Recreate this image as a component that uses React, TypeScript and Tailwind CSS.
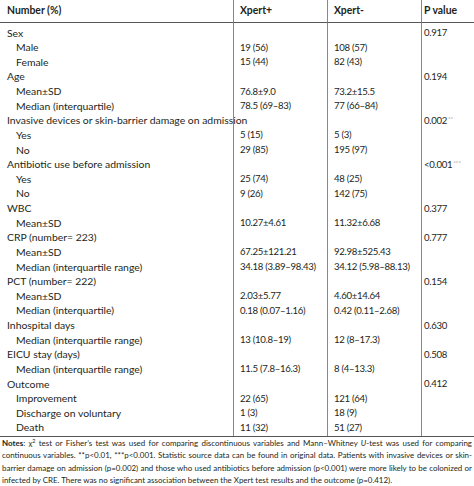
import React from "react";

type Row = { l: string; i?: boolean; a?: string; b?: string; p?: string; s?: string };

const rows: Row[] = [
  { l: "Sex", p: "0.917" },
  { l: "Male", i: true, a: "19 (56)", b: "108 (57)" },
  { l: "Female", i: true, a: "15 (44)", b: "82 (43)" },
  { l: "Age", p: "0.194" },
  { l: "Mean±SD", i: true, a: "76.8±9.0", b: "73.2±15.5" },
  { l: "Median (interquartile)", i: true, a: "78.5 (69–83)", b: "77 (66–84)" },
  { l: "Invasive devices or skin-barrier damage on admission", p: "0.002", s: "**" },
  { l: "Yes", i: true, a: "5 (15)", b: "5 (3)" },
  { l: "No", i: true, a: "29 (85)", b: "195 (97)" },
  { l: "Antibiotic use before admission", p: "<0.001", s: "***" },
  { l: "Yes", i: true, a: "25 (74)", b: "48 (25)" },
  { l: "No", i: true, a: "9 (26)", b: "142 (75)" },
  { l: "WBC", p: "0.377" },
  { l: "Mean±SD", i: true, a: "10.27±4.61", b: "11.32±6.68" },
  { l: "CRP (number= 223)", p: "0.777" },
  { l: "Mean±SD", i: true, a: "67.25±121.21", b: "92.98±525.43" },
  { l: "Median (interquartile range)", i: true, a: "34.18 (3.89–98.43)", b: "34.12 (5.98–88.13)" },
  { l: "PCT (number= 222)", p: "0.154" },
  { l: "Mean±SD", i: true, a: "2.03±5.77", b: "4.60±14.64" },
  { l: "Median (interquartile)", i: true, a: "0.18 (0.07–1.16)", b: "0.42 (0.11–2.68)" },
  { l: "Inhospital days", p: "0.630" },
  { l: "Median (interquartile range)", i: true, a: "13 (10.8–19)", b: "12 (8–17.3)" },
  { l: "EICU stay (days)", p: "0.508" },
  { l: "Median (interquartile range)", i: true, a: "11.5 (7.8–16.3)", b: "8 (4–13.3)" },
  { l: "Outcome", p: "0.412" },
  { l: "Improvement", i: true, a: "22 (65)", b: "121 (64)" },
  { l: "Discharge on voluntary", i: true, a: "1 (3)", b: "18 (9)" },
  { l: "Death", i: true, a: "11 (32)", b: "51 (27)" },
];

export default function App() {
  return (
    <div
      className="w-[474px] h-[486px] bg-white text-[#231f20] overflow-hidden"
      style={{ fontFamily: "Lato, 'Open Sans', sans-serif" }}
    >
      <div className="grid grid-cols-[233px_94px_94px_53px] text-[10.4px]">
        <div className="h-[23px] flex items-center pl-[7px] font-bold border-b border-[#555]">Number (%)</div>
        <div className="h-[23px] flex items-center pl-[6px] font-bold border-b border-l border-b-[#555] border-l-[#888]">Xpert+</div>
        <div className="h-[23px] flex items-center pl-[6px] font-bold border-b border-l border-b-[#555] border-l-[#888]">Xpert-</div>
        <div className="h-[23px] flex items-center pl-[2px] font-bold border-b border-l border-b-[#555] border-l-[#888]">P value</div>

        <div className="h-[3px]" />
        <div className="h-[3px] border-l border-[#888]" />
        <div className="h-[3px] border-l border-[#888]" />
        <div className="h-[3px] border-l border-[#888]" />

        {rows.map((r, k) => (
          <React.Fragment key={k}>
            <div className={`h-[14.63px] flex items-center whitespace-nowrap ${r.i ? "pl-[16px]" : "pl-[7px]"}`}>{r.l}</div>
            <div className="h-[14.63px] flex items-center pl-[6px] border-l border-[#888] whitespace-nowrap text-[9.6px] tracking-[-0.3px]">{r.a}</div>
            <div className="h-[14.63px] flex items-center pl-[6px] border-l border-[#888] whitespace-nowrap text-[9.6px] tracking-[-0.3px]">{r.b}</div>
            <div className="h-[14.63px] flex items-center pl-[2px] border-l border-[#888] whitespace-nowrap text-[9.6px] tracking-[-0.3px]">
              {r.p}
              {r.s && <span className="text-[6px] leading-none text-[#888] ml-[1px] self-start mt-[2px] tracking-normal">{r.s}</span>}
            </div>
          </React.Fragment>
        ))}
      </div>
      <div className="border-t border-[#555]" />
      <p className="px-[2px] text-[7.95px] leading-[12.5px] text-justify">
        <b>Notes</b>: χ<span className="text-[5.5px] align-[3px] leading-none">2</span> test or Fisher’s test was used for comparing discontinuous variables and Mann–Whitney <i>U</i>-test was used for comparing continuous variables. **p&lt;0.01, ***p&lt;0.001. Statistic source data can be found in original data. Patients with invasive devices or skin-barrier damage on admission (p=0.002) and those who used antibiotics before admission (p&lt;0.001) were more likely to be colonized or infected by CRE. There was no significant association between the Xpert test results and the outcome (p=0.412).
      </p>
    </div>
  );
}
